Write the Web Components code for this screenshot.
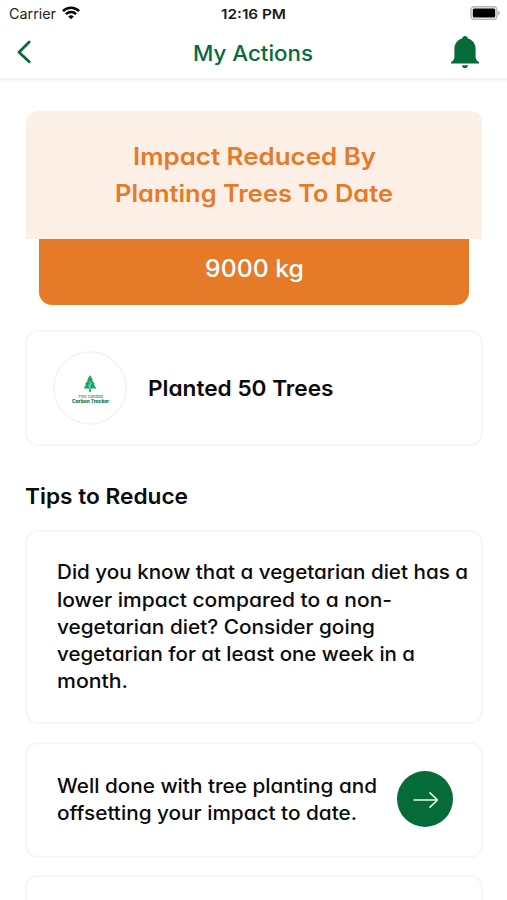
<!DOCTYPE html>
<html lang="en">
<head>
<meta charset="utf-8">
<title>My Actions</title>
<style>
html,body{margin:0;height:100%;overflow:hidden;background:#fff}
body{font-family:Inter,"Open Sans",sans-serif;font-feature-settings:"cv11","ss03";color:#0b0b0b}
</style>
</head>
<body>
<actions-app></actions-app>
<script>
const define = (name, html) => {
  customElements.define(name, class extends HTMLElement {
    constructor() {
      super();
      this.attachShadow({ mode: 'open' }).innerHTML = html;
    }
  });
};

/* One line of text, widened so that it spans the width given in pixels. */
customElements.define('text-line', class extends HTMLElement {
  constructor() {
    super();
    this.attachShadow({ mode: 'open' }).innerHTML = `
      <style>:host{display:block;white-space:nowrap;text-align:left;flex:none}span{display:inline-block;transform-origin:0 50%}</style>
      <span><slot></slot></span>`;
  }
  connectedCallback() {
    const span = this.shadowRoot.querySelector('span');
    const target = Number(this.getAttribute('span'));
    const natural = span.getBoundingClientRect().width;
    this.style.width = target + 'px';
    if (natural) span.style.transform = `scaleX(${target / natural})`;
  }
});

define('status-bar', `
<style>
:host{display:grid;grid-template-columns:1fr auto 1fr;align-items:center;height:27px;flex:none;padding:0 7px 0 9px;font-size:14px;font-feature-settings:normal;color:#222}
.left{display:flex;align-items:center;gap:6px}
.time{font-weight:600;font-size:13.5px;color:#1a1a1a;margin-left:-2px}
.battery{justify-self:end;display:block;margin-top:-1px}
svg{display:block}
.left svg{margin-top:-1px}
</style>
<div class="left"><text-line span="47">Carrier</text-line>
<svg width="18" height="14" viewBox="0 0 18 14" fill="none" stroke="#050505" stroke-width="2.5"><path d="M.9 5.1C5.5.6 12.5.6 17.1 5.1"/><path d="M3.9 8.2C6.8 5.4 11.2 5.4 14.1 8.2"/><path d="M9 13.3 6.2 10.5Q9 8.2 11.8 10.5Z" fill="#050505" stroke="none"/></svg></div>
<text-line class="time" span="65">12:16 PM</text-line>
<svg class="battery" width="30" height="14" viewBox="0 0 30 14"><rect x=".9" y=".8" width="26" height="12.6" rx="3.3" fill="#f4f4f4" stroke="#b5b5b5" stroke-width="1.4"/><rect x="2.8" y="2.6" width="22.4" height="9" rx="1.5"/><path d="M28.2 4.8q1.7.5 1.7 2.3t-1.7 2.3z" fill="#aaa"/></svg>`);

define('nav-bar', `
<style>
:host{display:grid;grid-template-columns:1fr auto 1fr;align-items:center;height:51px;flex:none;padding:0 27px 0 16px;border-bottom:2px solid #f1f1f1;color:#056c39;font-size:21.5px;font-weight:500;line-height:30px;box-shadow:0 1px 1px #fafafa}
.bell{justify-self:end}
.title{margin-left:10px}
svg{display:block;margin-top:-2px}
</style>
<svg width="16" height="24" viewBox="0 0 16 24" fill="none" stroke="currentColor" stroke-width="2.8" stroke-linecap="round" stroke-linejoin="round"><path d="M13.2 2 3 12.2 13.2 21.8"/></svg>
<div class="title"><slot></slot></div>
<svg class="bell" width="30" height="34" viewBox="0 0 30 34" fill="currentColor"><path d="M15 1c1.6 0 2.7 1 2.8 2.6 4.9 1.3 7.8 5.3 7.8 10.5v8.3q0 2.6 3.4 4.8v1.3H1v-1.3q3.4-2.2 3.4-4.8v-8.3c0-5.2 2.9-9.2 7.8-10.5C12.3 2 13.4 1 15 1ZM12 30.2h6q-.3 3-3 3t-3-3Z"/></svg>`);

define('impact-card', `
<style>
:host{display:block}
.top,.total{display:flex;flex-direction:column;align-items:center}
.top{height:128px;box-sizing:border-box;padding-top:28px;border-radius:12px 12px 0 0;background:#fcefe6;color:#e57b29;font-size:24px;font-weight:600;line-height:36.6px}
.total{height:66px;margin:0 13px;border-radius:0 0 13px 13px;background:#e57b29;color:#fff;font-size:24px;font-weight:500;line-height:59px}
</style>
<div class="top"><slot name="title"></slot></div>
<div class="total"><slot></slot></div>`);

define('outline-card', `
<style>:host{display:flex;align-items:center;box-sizing:border-box;border:2px solid #f6f6f6;border-radius:13px;background:#fff}</style>
<slot></slot>`);

define('tree-badge', `
<style>
:host{display:flex;flex-direction:column;align-items:center;box-sizing:border-box;width:74px;height:74px;border:2px solid #f5f5f5;border-radius:50%;padding-top:22px;flex:none;color:#087447}
svg{display:block}
.small{font-size:4px;line-height:5px;color:#56947b;margin-top:1px}
.name{font-size:4.3px;line-height:5px;font-weight:800}
</style>
<svg width="14" height="18" viewBox="0 0 14 18"><path fill="#18a665" d="M7 0 10 5.2H9L12 9.2H10.8L13.3 13.5H8v3.2H6v-3.2H.7L3.2 9.2H2L5 5.2H4Z"/><path d="M7 6v9M7 10l2-2M7 12 5 10" fill="none" stroke="#a1dfc1" stroke-width=".8"/></svg>
<text-line class="small" span="25">Tree Canada</text-line>
<text-line class="name" span="37">Carbon Tracker</text-line>`);

define('arrow-button', `
<style>:host{display:block;width:56px;height:56px;border-radius:50%;background:#056c39;flex:none;margin-bottom:2px}svg{display:block}</style>
<svg width="56" height="56" viewBox="0 0 56 56" fill="none" stroke="#e9f7ef" stroke-width="1.6" stroke-linecap="round" stroke-linejoin="round"><path d="M17 29H40.5M33 21.8 40.5 29 33 36.2"/></svg>`);

define('actions-app', `
<style>
:host{display:flex;flex-direction:column;height:900px;overflow:hidden}
main{display:flex;flex-direction:column;padding:31px 25px 0 26px}
main>*{flex:none}
impact-card{width:456px}
outline-card{width:458px;margin-left:-1px}
.planted{height:116px;margin-top:25px;padding-left:26px;gap:21px;font-size:22px;font-weight:600}
h2{margin:34px 0 0 -1px;font-size:22px;line-height:32px;font-weight:600}
.tip{font-size:20px;font-weight:500;line-height:27.2px;padding-left:30px}
.one{height:194px;margin-top:18px;padding-top:1px}
.two{height:116px;margin-top:18px;padding-right:28px;justify-content:space-between}
.three{height:116px;margin-top:17px}
</style>
<status-bar></status-bar>
<nav-bar><text-line span="120">My Actions</text-line></nav-bar>
<main>
  <impact-card>
    <text-line slot="title" span="243">Impact Reduced By</text-line>
    <text-line slot="title" span="278">Planting Trees To Date</text-line>
    <text-line span="99">9000 kg</text-line>
  </impact-card>
  <outline-card class="planted"><tree-badge></tree-badge><text-line span="185.5">Planted 50 Trees</text-line></outline-card>
  <h2><text-line span="163">Tips to Reduce</text-line></h2>
  <outline-card class="tip one"><div>
    <text-line span="411">Did you know that a vegetarian diet has a</text-line>
    <text-line span="335">lower impact compared to a non-</text-line>
    <text-line span="318">vegetarian diet? Consider going</text-line>
    <text-line span="358">vegetarian for at least one week in a</text-line>
    <text-line span="71">month.</text-line>
  </div></outline-card>
  <outline-card class="tip two"><div>
    <text-line span="320">Well done with tree planting and</text-line>
    <text-line span="300">offsetting your impact to date.</text-line>
  </div><arrow-button></arrow-button></outline-card>
  <outline-card class="three"></outline-card>
</main>`);
</script>
</body>
</html>
